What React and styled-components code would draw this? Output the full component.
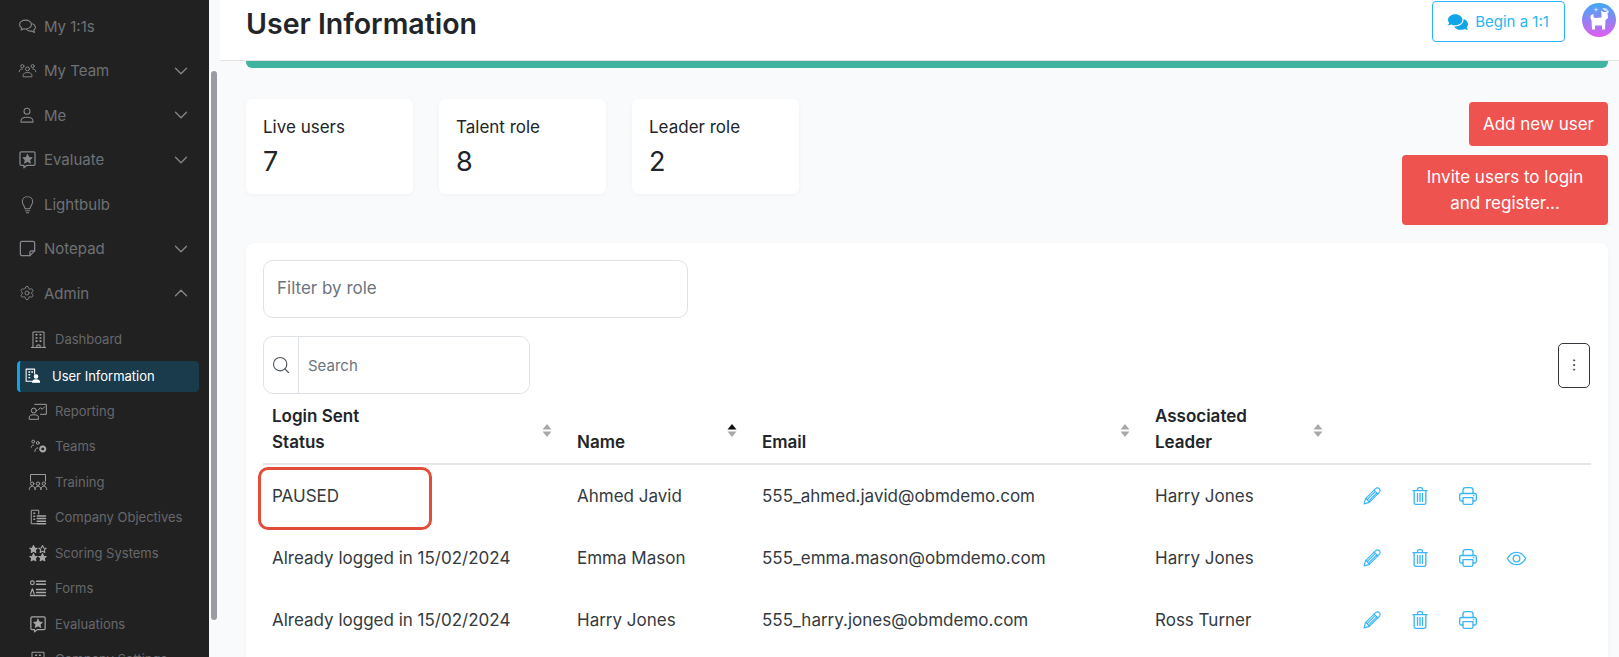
import React from "react";
import styled, { createGlobalStyle } from "styled-components";
import { ChevronDown, ChevronUp, Settings, Search as SearchGlass, MoreVertical } from "lucide-react";
import { FaComments } from "react-icons/fa";

const GlobalStyle = createGlobalStyle`
    * { box-sizing: border-box; }
    html, body { margin: 0; height: 100%; overflow: hidden; }
    body {
        font-family: Inter, "Liberation Sans", sans-serif;
        background: #f9fafc;
        color: #212529;
    }
`;

// line icons of the sidebar and the table, drawn by hand because no package has these shapes
const Svg = ({ size = 18, sw = 1.4, children }) => (
    <svg width={size} height={size} viewBox="0 0 24 24" fill="none" stroke="currentColor" strokeWidth={sw} strokeLinecap="round" strokeLinejoin="round">
        {children}
    </svg>
);

const star = "M12 5.500l1.800 3.800 4.200.5-3.100 2.800.9 4.100-3.800-2.100-3.800 2.100.9-4.100L6 9.800l4.200-.5z";

const ChatIcon = () => (
    <Svg size={19}>
        <path d="M9.5 4C5.4 4 2 6.4 2 9.5c0 1.7 1 3.2 2.6 4.2L4 16.5l3.2-1.6c.7.1 1.500.2 2.300.2 4.100 0 7.500-2.500 7.500-5.600S13.600 4 9.500 4z" />
        <path d="M18.500 8.500c2.100.9 3.500 2.500 3.500 4.300 0 1.300-.7 2.500-1.900 3.400l.6 3.300-3.300-1.800c-2.600.4-5-.4-6.400-1.900" />
    </Svg>
);
const TeamIcon = () => (
    <Svg size={19} sw={1.2}>
        <circle cx="5.500" cy="6.500" r="2" />
        <circle cx="18.500" cy="6.500" r="2" />
        <circle cx="12" cy="10" r="2.500" />
        <path d="M1.500 13.500c0-2 1.500-3.500 4-3.500 M22.500 13.500c0-2-1.500-3.500-4-3.500" />
        <path d="M6.500 19.500v-1.500c0-2 2-3.500 5.500-3.500s5.500 1.500 5.500 3.500v1.500z" />
    </Svg>
);
const PersonIcon = () => (
    <Svg size={18}>
        <circle cx="12" cy="7" r="4" />
        <path d="M4 21.500v-1.500c0-3 3-5 8-5s8 2 8 5v1.500z" />
    </Svg>
);
const EvalIcon = ({ size = 19 }) => (
    <Svg size={size} sw={1.6}>
        <path d="M4 2.500h16a1.500 1.500 0 0 1 1.500 1.500v14a1.500 1.500 0 0 1-1.500 1.500h-9L7.500 22.500v-3H4A1.500 1.500 0 0 1 2.500 18V4A1.500 1.500 0 0 1 4 2.500z" />
        <path d={star} fill="currentColor" strokeWidth="1" />
    </Svg>
);
const BulbIcon = () => (
    <Svg size={19} sw={1.3}>
        <path d="M12 2c-3.800 0-6.500 2.800-6.500 6.500 0 3.200 2.300 5 3 7.500.2.700.3 1 .5 1.500h6c.2-.5.3-.8.5-1.500.7-2.500 3-4.300 3-7.500C18.500 4.800 15.800 2 12 2z" />
        <path d="M9.500 20h5 M10.500 22.500h3" />
    </Svg>
);
const NoteIcon = () => (
    <Svg size={19} sw={1.6}>
        <path d="M5 3h14a2 2 0 0 1 2 2v10l-6 6H5a2 2 0 0 1-2-2V5a2 2 0 0 1 2-2z" />
        <path d="M21 15h-4a2 2 0 0 0-2 2v4" />
    </Svg>
);
const GearIcon = () => <Settings size={16} strokeWidth={1.4} />;

const BuildingIcon = () => (
    <Svg size={19} sw={1.2}>
        <path d="M5 22V2.500h14V22 M3 22h18 M10 22v-3h4v3" />
        <path d="M9 6h1 M14 6h1 M9 10h1 M14 10h1 M9 14h1 M14 14h1" strokeWidth="2" />
    </Svg>
);
const UserBuildingIcon = () => (
    <Svg size={17} sw={1.5}>
        <path d="M11 20H3V3h12v7" />
        <path d="M7 7h1 M11 7h1 M7 11h1 M7 15h1" strokeWidth="2" />
        <circle cx="17" cy="13.500" r="2.500" fill="currentColor" />
        <path d="M12 21.500c0-2.500 2-3.500 5-3.500s5 1 5 3.500z" fill="currentColor" />
    </Svg>
);
const ReportingIcon = () => (
    <Svg size={20} sw={1.1}>
        <path d="M8 4h14v12h-7" />
        <path d="M12 11l3-3 2 2 3-3" />
        <circle cx="7" cy="11.500" r="3" />
        <path d="M1.500 21.500v-2c0-2 2-3 5.500-3s5.500 1 5.500 3v2z" />
    </Svg>
);
const TeamsIcon = () => (
    <Svg size={17} sw={1.3}>
        <circle cx="4.500" cy="5" r="2" />
        <circle cx="11" cy="7" r="2" />
        <path d="M2 13c0-2 1-3 3-3 M7 19c0-3 1-5 4-5" />
        <circle cx="18" cy="15.500" r="3.500" strokeWidth="3" strokeDasharray="2 1" />
    </Svg>
);
const TrainingIcon = () => (
    <Svg size={20} sw={1.1}>
        <path d="M3 11V3h18v8" />
        <circle cx="5" cy="14" r="2" />
        <circle cx="12" cy="14" r="2" />
        <circle cx="19" cy="14" r="2" />
        <path d="M1.500 21c0-2.500 1.500-4 3.500-4s3.500 1.500 3.500 4 M8.500 21c0-2.500 1.500-4 3.500-4s3.500 1.500 3.500 4 M15.500 21c0-2.500 1.500-4 3.500-4s3.500 1.500 3.500 4" />
    </Svg>
);
const ObjectivesIcon = () => (
    <Svg size={18} sw={1.3}>
        <path d="M10 21H3V3h10v5" />
        <path d="M6.500 7h1 M6.500 11h1 M6.500 15h1" strokeWidth="2" />
        <path d="M11 10.500h11 M11 14h11 M11 17.500h11 M11 21h11" strokeWidth="2" />
    </Svg>
);
const ScoringIcon = () => (
    <svg width="18" height="18" viewBox="0 0 24 24" stroke="currentColor" strokeWidth="1.400" strokeLinejoin="round">
        <path fill="currentColor" d="M6 2l1.500 3.200 3.500.4-2.600 2.300.7 3.400L6 9.600l-3.100 1.700.7-3.400L1 5.600l3.500-.4z" />
        <path fill="none" d="M18 2l1.500 3.200 3.500.4-2.600 2.300.7 3.400-3.100-1.700-3.100 1.700.7-3.400L13 5.600l3.500-.4z" />
        <path fill="currentColor" d="M6 13l1.500 3.200 3.500.4-2.600 2.300.7 3.400L6 20.600l-3.100 1.700.7-3.400L1 16.600l3.500-.4z" />
        <path fill="currentColor" d="M18 13l1.500 3.200 3.500.4-2.600 2.300.7 3.400-3.100-1.700-3.100 1.700.7-3.400L13 16.600l3.500-.4z" />
    </svg>
);
const FormsIcon = () => (
    <Svg size={18} sw={1.500}>
        <circle cx="4.500" cy="5" r="2.500" />
        <path d="M2 20l2.500-7 2.500 7" />
        <path d="M10 3h12 M10 7h12 M10 14h12 M10 18h12 M2 22h20" strokeWidth="1.800" />
    </Svg>
);
const CompanyIcon = () => (
    <Svg size={18} sw={1.2}>
        <path d="M4 22V3h16v19" />
        <path d="M9 7h1 M14 7h1" strokeWidth="2" />
    </Svg>
);

const PencilIcon = () => (
    <Svg size={20} sw={1.4}>
        <path d="M2.500 21.500l1.800-6.300L16.300 3.200a2.600 2.600 0 0 1 4.500 4.500L8.800 19.700z" />
        <path d="M14.500 5l4.500 4.500 M4.800 15l4.200 4.200 M7 15.500l9-9 M9 17l9-9" />
    </Svg>
);
const TrashIcon = () => (
    <Svg size={20} sw={1.6}>
        <path d="M3.500 5.500h17 M9 5.500V4a2 2 0 0 1 2-2h2a2 2 0 0 1 2 2v1.500" />
        <path d="M5 5.500v14.500a2 2 0 0 0 2 2h10a2 2 0 0 0 2-2V5.500" />
        <path d="M9 9v9.500 M12 9v9.500 M15 9v9.500" />
    </Svg>
);
const PrinterIcon = () => (
    <Svg size={20} sw={1.6}>
        <path d="M6 9V5a3 3 0 0 1 3-3h6a3 3 0 0 1 3 3v4" />
        <path d="M6 18H4a2 2 0 0 1-2-2v-5a2 2 0 0 1 2-2h16a2 2 0 0 1 2 2v5a2 2 0 0 1-2 2h-2" />
        <path d="M6 14h12v6a2 2 0 0 1-2 2H8a2 2 0 0 1-2-2z" />
        <path d="M18.500 11.500h.5" />
    </Svg>
);
const EyeIcon = () => (
    <Svg size={21} sw={1.5}>
        <path d="M1.500 12C4 7.500 7.800 5 12 5s8 2.500 10.500 7c-2.500 4.500-6.300 7-10.500 7S4 16.500 1.500 12z" />
        <circle cx="12" cy="12" r="3.800" />
    </Svg>
);
const SortIcon = ({ active }) => (
    <svg width="10" height="13" viewBox="0 0 10 13">
        <path d="M5 0l4.500 5.500h-9z" fill={active ? "#111" : "#a9a9a9"} />
        <path d="M5 13L.5 7.500h9z" fill="#a9a9a9" />
    </svg>
);
const CatAvatar = () => (
    <svg width="34" height="34" viewBox="0 0 34 34">
        <defs>
            <linearGradient id="avatarFill" x1="0" y1="0" x2="0" y2="1">
                <stop offset="0" stopColor="#3fa9f5" />
                <stop offset="1" stopColor="#e25cf0" />
            </linearGradient>
        </defs>
        <circle cx="17" cy="17" r="17" fill="url(#avatarFill)" />
        <path fill="#fff" d="M9 12c-1 2-.5 4 .5 5.500l.5 9h3v-4h7v4h3l.5-9.500 2.500-2-.5-4.500 1-3-3 1.500h-2l-2.500-1.500.5 3.500v3.500l-7 .5-1-1.500c-.5-1 .5-2 0-2.500z" />
        <path fill="#cfe0ff" d="M20 5.500a5 5 0 0 1 7 5l-2-3-2 .5z" />
        <path fill="#fff" d="M14 4l.6 2 2 .6-2 .6L14 9.500l-.6-2.300-2-.6 2-.6z" opacity=".7" />
    </svg>
);

const mainNav = [
    { label: "My 1:1s", Icon: ChatIcon },
    { label: "My Team", Icon: TeamIcon, caret: "down" },
    { label: "Me", Icon: PersonIcon, caret: "down" },
    { label: "Evaluate", Icon: EvalIcon, caret: "down" },
    { label: "Lightbulb", Icon: BulbIcon },
    { label: "Notepad", Icon: NoteIcon, caret: "down" },
    { label: "Admin", Icon: GearIcon, caret: "up" },
];

const adminNav = [
    { label: "Dashboard", Icon: BuildingIcon },
    { label: "User Information", Icon: UserBuildingIcon, active: true },
    { label: "Reporting", Icon: ReportingIcon },
    { label: "Teams", Icon: TeamsIcon },
    { label: "Training", Icon: TrainingIcon },
    { label: "Company Objectives", Icon: ObjectivesIcon },
    { label: "Scoring Systems", Icon: ScoringIcon },
    { label: "Forms", Icon: FormsIcon },
    { label: "Evaluations", Icon: () => <EvalIcon size={18} /> },
    { label: "Company Settings", Icon: CompanyIcon },
];

const stats = [
    { label: "Live users", value: 7 },
    { label: "Talent role", value: 8 },
    { label: "Leader role", value: 2 },
];

const users = [
    { status: "PAUSED", name: "Ahmed Javid", email: "555_ahmed.javid@obmdemo.com", leader: "Harry Jones", flagged: true },
    { status: "Already logged in 15/02/2024", name: "Emma Mason", email: "555_emma.mason@obmdemo.com", leader: "Harry Jones", canView: true },
    { status: "Already logged in 15/02/2024", name: "Harry Jones", email: "555_harry.jones@obmdemo.com", leader: "Ross Turner" },
];

const App = () => (
    <>
        <GlobalStyle />
        <Page>
            <Sidebar>
                {mainNav.map(({ label, Icon, caret }) => (
                    <NavItem key={label}>
                        <NavIcon><Icon /></NavIcon>
                        <NavLabel>{label}</NavLabel>
                        {caret === "down" && <ChevronDown size={22} strokeWidth={1.4} />}
                        {caret === "up" && <ChevronUp size={22} strokeWidth={1.4} />}
                    </NavItem>
                ))}
                <SubNav>
                    {adminNav.map(({ label, Icon, active }) => (
                        <SubItem key={label} $active={active}>
                            <SubIcon $active={active}><Icon /></SubIcon>
                            {label}
                        </SubItem>
                    ))}
                </SubNav>
            </Sidebar>
            <ScrollTrack><ScrollThumb /></ScrollTrack>
            <Main>
                <Header>
                    <Title>User Information</Title>
                    <BeginButton><FaComments size={20} />Begin a 1:1</BeginButton>
                    <Avatar><CatAvatar /></Avatar>
                </Header>
                <Content>
                    <ProgressBar />
                    <TopRow>
                        <StatRow>
                            {stats.map(s => (
                                <StatCard key={s.label}>
                                    <StatLabel>{s.label}</StatLabel>
                                    <StatValue>{s.value}</StatValue>
                                </StatCard>
                            ))}
                        </StatRow>
                        <ActionColumn>
                            <RedButton>Add new user</RedButton>
                            <RedButton $wide>Invite users to login and register...</RedButton>
                        </ActionColumn>
                    </TopRow>
                    <TableCard>
                        <FilterInput placeholder="Filter by role" />
                        <SearchRow>
                            <SearchBox>
                                <SearchAddon><SearchGlass size={20} strokeWidth={1.3} /></SearchAddon>
                                <SearchInput placeholder="Search" />
                            </SearchBox>
                            <KebabButton><MoreVertical size={16} strokeWidth={1.2} /></KebabButton>
                        </SearchRow>
                        <HeadRow>
                            <HeadCell>
                                <span>Login Sent<br />Status</span>
                                <SortSlot><SortIcon /></SortSlot>
                            </HeadCell>
                            <HeadCell>
                                <span>Name</span>
                                <SortSlot><SortIcon active /></SortSlot>
                            </HeadCell>
                            <HeadCell>
                                <span>Email</span>
                                <SortSlot><SortIcon /></SortSlot>
                            </HeadCell>
                            <HeadCell>
                                <span>Associated<br />Leader</span>
                                <SortSlot><SortIcon /></SortSlot>
                            </HeadCell>
                        </HeadRow>
                        {users.map(u => (
                            <Row key={u.email}>
                                <Cell>
                                    {u.status}
                                    {u.flagged && <Highlight />}
                                </Cell>
                                <Cell>{u.name}</Cell>
                                <Cell>{u.email}</Cell>
                                <Cell>{u.leader}</Cell>
                                <Actions>
                                    <PencilIcon />
                                    <TrashIcon />
                                    <PrinterIcon />
                                    {u.canView && <EyeIcon />}
                                </Actions>
                            </Row>
                        ))}
                    </TableCard>
                </Content>
            </Main>
        </Page>
    </>
);

const Page = styled.div`
    display: flex;
    width: 1619px;
    height: 657px;
    overflow: hidden;
`;

const Sidebar = styled.nav`
    flex: 0 0 209px;
    height: 720px;
    padding-top: 4px;
    background: #212121;
    color: #6f7175;
`;

const NavItem = styled.div`
    display: flex;
    align-items: center;
    height: 44.5px;
    padding: 0 17px 0 17px;
    font-size: 15px;
    svg:last-child { color: #85878a; }
`;

const NavIcon = styled.span`
    flex: 0 0 20px;
    display: flex;
    justify-content: center;
    margin-right: 7px;
    color: #dcdcdc;
`;

const NavLabel = styled.span`
    flex: 1;
`;

const SubNav = styled.div`
    display: flex;
    flex-direction: column;
    padding: 6px 10px 0 17px;
`;

const SubItem = styled.div`
    display: flex;
    align-items: center;
    height: ${({ $active }) => ($active ? "31px" : "35.5px")};
    margin: ${({ $active }) => ($active ? "4px 0 1px" : "0")};
    padding-left: ${({ $active }) => ($active ? "0" : "11px")};
    padding-bottom: ${({ $active }) => ($active ? "2px" : "0")};
    border-left: ${({ $active }) => ($active ? "3px solid #0ea5e9" : "none")};
    border-radius: 4px;
    background: ${({ $active }) => ($active ? "#1a3b4c" : "transparent")};
    color: ${({ $active }) => ($active ? "#ffffff" : "#67686b")};
    font-size: 13px;
`;

const SubIcon = styled.span`
    flex: 0 0 20px;
    display: flex;
    justify-content: center;
    margin: ${({ $active }) => ($active ? "0 10px 0 2px" : "0 7px 0 0")};
    color: ${({ $active }) => ($active ? "#ffffff" : "#a8a8a8")};
`;

const ScrollTrack = styled.div`
    flex: 0 0 11px;
    padding: 71px 3px 0 2px;
    background: #f9fafc;
`;

const ScrollThumb = styled.div`
    height: 549px;
    border-radius: 3px;
    background: #9b9ca1;
`;

const Main = styled.main`
    flex: 1;
    min-width: 0;
`;

const Header = styled.header`
    display: flex;
    align-items: flex-start;
    height: 61px;
    padding: 1px 3px 0 26px;
    background: #ffffff;
    border-bottom: 1px solid #e3e3e3;
`;

const Title = styled.h1`
    flex: 1;
    margin: 0;
    font-size: 28.5px;
    line-height: 46px;
    font-weight: 600;
    color: #212529;
`;

const BeginButton = styled.button`
    display: flex;
    align-items: center;
    justify-content: center;
    gap: 7px;
    width: 133px;
    height: 41px;
    margin-right: 17px;
    background: #ffffff;
    border: 1px solid #29b6f6;
    border-radius: 4px;
    color: #29b6f6;
    font: 400 15px Inter, sans-serif;
    svg { color: #0ea5e9; }
`;

const Avatar = styled.div`
    width: 34px;
    height: 34px;
    margin-top: 2px;
`;

const Content = styled.div`
    padding: 0 11px 0 26px;
`;

const ProgressBar = styled.div`
    height: 7px;
    background: #40b4a0;
    border-radius: 0 0 6px 6px;
`;

const TopRow = styled.div`
    display: flex;
    justify-content: space-between;
    align-items: flex-start;
    padding-top: 31px;
    height: 175px;
`;

const StatRow = styled.div`
    display: flex;
    gap: 26px;
`;

const StatCard = styled.div`
    width: 167px;
    height: 95px;
    padding: 17px 17px;
    background: #ffffff;
    border-radius: 6px;
    box-shadow: 0 1px 4px rgba(0, 0, 0, 0.04);
`;

const StatLabel = styled.div`
    font-size: 17px;
    line-height: 22px;
`;

const StatValue = styled.div`
    margin-top: 8px;
    font-size: 27px;
    line-height: 32px;
`;

const ActionColumn = styled.div`
    display: flex;
    flex-direction: column;
    align-items: flex-end;
    gap: 9px;
    padding-top: 3px;
`;

const RedButton = styled.button`
    width: ${({ $wide }) => ($wide ? "206px" : "139px")};
    height: ${({ $wide }) => ($wide ? "70px" : "44px")};
    padding: 0 12px;
    background: #ef5350;
    border: none;
    border-radius: 4px;
    color: #ffffff;
    font: 400 17px/26px Inter, sans-serif;
`;

const TableCard = styled.section`
    height: 420px;
    padding: 17px 17px 0;
    background: #ffffff;
    border-radius: 8px;
    box-shadow: 0 1px 4px rgba(0, 0, 0, 0.04);
`;

const FilterInput = styled.input`
    display: block;
    width: 425px;
    height: 58px;
    padding: 0 13px 3px;
    border: 1px solid #dee2e6;
    border-radius: 10px;
    font: 400 17px Inter, sans-serif;
    &::placeholder { color: #6c757d; }
`;

const SearchRow = styled.div`
    display: flex;
    justify-content: space-between;
    align-items: center;
    margin-top: 18px;
`;

const SearchBox = styled.div`
    display: flex;
    width: 267px;
    height: 58px;
    border: 1px solid #dee2e6;
    border-radius: 10px;
    overflow: hidden;
`;

const SearchAddon = styled.span`
    flex: 0 0 35px;
    display: flex;
    align-items: center;
    justify-content: center;
    border-right: 1px solid #dee2e6;
    color: #495057;
`;

const SearchInput = styled.input`
    flex: 1;
    min-width: 0;
    padding: 0 9px;
    border: none;
    font: 400 15px Inter, sans-serif;
    &::placeholder { color: #6c757d; }
`;

const KebabButton = styled.button`
    display: flex;
    align-items: center;
    justify-content: center;
    width: 32px;
    height: 45px;
    margin-right: 1px;
    padding: 0;
    background: #ffffff;
    border: 1px solid #33363a;
    border-radius: 5px;
    color: #33363a;
`;

const columns = "305px 185px 393px 193px 1fr";

const HeadRow = styled.div`
    display: grid;
    grid-template-columns: ${columns};
    height: 71px;
    padding-top: 9px;
    border-bottom: 2px solid #e5e7eb;
`;

const HeadCell = styled.div`
    display: flex;
    justify-content: space-between;
    align-items: flex-end;
    padding: 0 16px 8px 9px;
    font-size: 17px;
    font-weight: 600;
    line-height: 25.500px;
    color: #212529;
`;

const SortSlot = styled.span`
    display: flex;
    align-self: center;
    margin-top: 2px;
`;

const Row = styled.div`
    display: grid;
    grid-template-columns: ${columns};
    align-items: center;
    height: 62px;
`;

const Cell = styled.div`
    position: relative;
    padding: 0 9px;
    font-size: 17px;
    color: #343a40;
    white-space: nowrap;
`;

// red annotation that was put over the screenshot
const Highlight = styled.span`
    position: absolute;
    left: -5px;
    top: -19px;
    width: 174px;
    height: 63px;
    border: 3.5px solid #e24d3a;
    border-radius: 10px;
`;

const Actions = styled.div`
    display: flex;
    align-items: center;
    gap: 28px;
    padding-left: 23px;
    color: #38b6f8;
`;

export default App;
